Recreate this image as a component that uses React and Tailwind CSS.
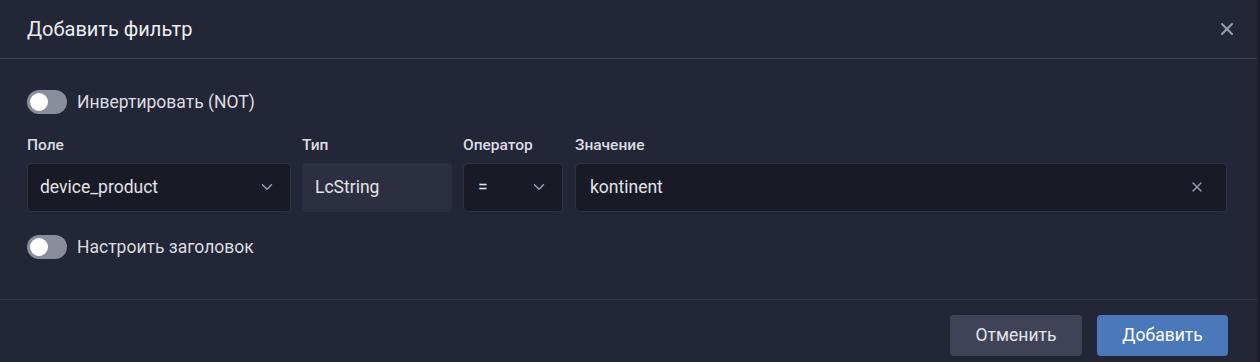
import React, { useState } from "react";
import { X, ChevronDown } from "lucide-react";

const Toggle = ({ on, onChange, label }) => (
  <label className="flex items-center gap-[10px] cursor-pointer select-none">
    <button
      type="button"
      onClick={() => onChange(!on)}
      className={`relative w-[40px] h-[24px] rounded-full transition-colors ${on ? "bg-[#4a78bb]" : "bg-[#8a8d9c]"}`}
    >
      <span
        className={`absolute top-[3px] w-[18px] h-[18px] rounded-full bg-white transition-all ${on ? "left-[19px]" : "left-[3px]"}`}
      />
    </button>
    <span className="text-[17.5px] text-[#dcdde3]">{label}</span>
  </label>
);

const App = () => {
  const [invert, setInvert] = useState(false);
  const [customTitle, setCustomTitle] = useState(false);
  const [value, setValue] = useState("kontinent");

  return (
    <div
      className="w-[1260px] h-[362px] bg-[#232636] text-[#e2e3e8] flex flex-col border-r-[3px] border-[#1c1e2b]"
      style={{ fontFamily: "Roboto, 'Noto Sans', sans-serif" }}
    >
      {/* Header */}
      <div className="h-[59px] shrink-0 flex items-center justify-between pl-[27px] pr-[20px] border-b border-[#3b3e5a]">
        <h1 className="text-[20px] text-[#eceef2]">Добавить фильтр</h1>
        <button className="text-[#9a9cab] hover:text-white">
          <X size={20} strokeWidth={2.5} />
        </button>
      </div>

      {/* Body */}
      <div className="flex-1 pl-[27px] pr-[30px] pt-[30px]">
        <Toggle on={invert} onChange={setInvert} label="Инвертировать (NOT)" />

        <div className="flex gap-[11px] mt-[19px]">
          <div className="w-[264px] flex flex-col gap-[5px]">
            <span className="text-[15.5px] font-medium text-[#dcdde3]">Поле</span>
            <div className="h-[49px] bg-[#181a26] border border-[#2f3243] rounded-[4px] flex items-center justify-between pl-[12px] pr-[14px] text-[17.5px]">
              <span>device_product</span>
              <ChevronDown size={18} className="text-[#9a9cab]" />
            </div>
          </div>
          <div className="w-[150px] flex flex-col gap-[5px]">
            <span className="text-[15.5px] font-medium text-[#dcdde3]">Тип</span>
            <div className="h-[49px] bg-[#2c2f41] rounded-[4px] flex items-center px-[13px] text-[17.5px]">
              LcString
            </div>
          </div>
          <div className="w-[100px] flex flex-col gap-[5px]">
            <span className="text-[15.5px] font-medium text-[#dcdde3]">Оператор</span>
            <div className="h-[49px] bg-[#181a26] border border-[#2f3243] rounded-[4px] flex items-center justify-between pl-[14px] pr-[14px] text-[17.5px]">
              <span>=</span>
              <ChevronDown size={18} className="text-[#9a9cab]" />
            </div>
          </div>
          <div className="flex-1 ml-[1px] flex flex-col gap-[5px]">
            <span className="text-[15.5px] font-medium text-[#dcdde3]">Значение</span>
            <div className="h-[49px] bg-[#181a26] border border-[#2f3243] rounded-[4px] flex items-center pl-[14px] pr-[21px] text-[17.5px]">
              <input
                value={value}
                onChange={(e) => setValue(e.target.value)}
                className="flex-1 bg-transparent outline-none text-[#e2e3e8]"
              />
              <button onClick={() => setValue("")} className="text-[#9a9cab]">
                <X size={16} strokeWidth={2} />
              </button>
            </div>
          </div>
        </div>

        <div className="mt-[22px]">
          <Toggle on={customTitle} onChange={setCustomTitle} label="Настроить заголовок" />
        </div>
      </div>

      {/* Footer */}
      <div className="h-[63px] shrink-0 border-t border-[#363949] flex items-center justify-end gap-[15px] pr-[29px] pt-[9px]">
        <button className="w-[132px] h-[41px] rounded-[4px] bg-[#404358] text-[17.5px] text-[#e4e5ea]">
          Отменить
        </button>
        <button className="w-[131px] h-[41px] rounded-[4px] bg-[#4a78bb] text-[17.5px] text-white">
          Добавить
        </button>
      </div>
    </div>
  );
};

export default App;
